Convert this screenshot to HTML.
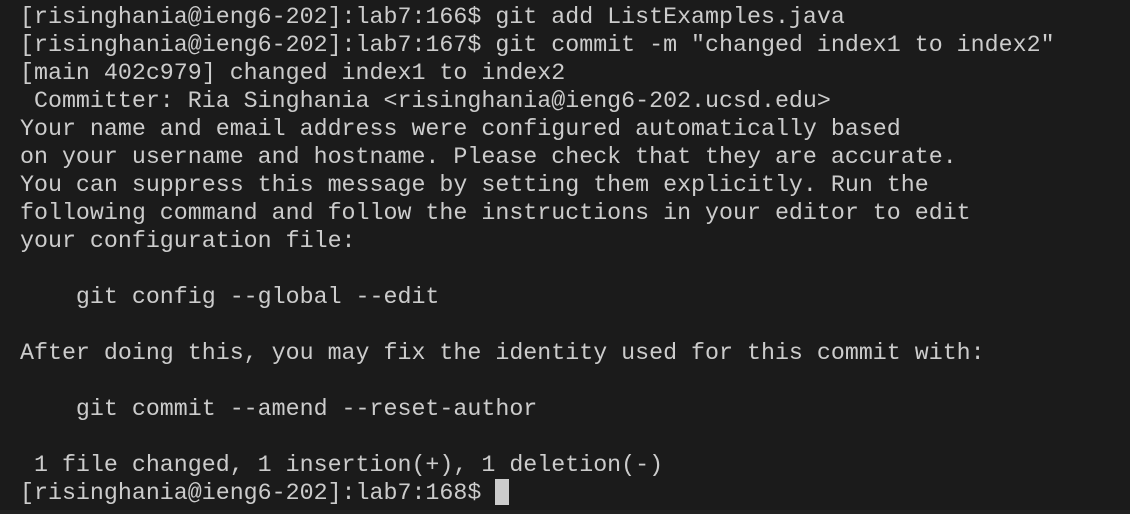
<!DOCTYPE html>
<html><head><meta charset="utf-8"><style>
html,body{margin:0;padding:0;background:#1b1b1b;width:1130px;height:514px;overflow:hidden}
pre{margin:0;position:absolute;left:20px;top:3px;font-family:"Liberation Mono",monospace;font-size:23.3px;line-height:28px;color:#cccccc;white-space:pre}
.cur{display:inline-block;width:14px;height:26px;background:#cccccc;vertical-align:-6px}
.bot{position:absolute;left:0;top:510px;width:1130px;height:4px;background:#232323}
</style></head><body>
<pre>[risinghania@ieng6-202]:lab7:166$ git add ListExamples.java
[risinghania@ieng6-202]:lab7:167$ git commit -m "changed index1 to index2"
[main 402c979] changed index1 to index2
 Committer: Ria Singhania &lt;risinghania@ieng6-202.ucsd.edu&gt;
Your name and email address were configured automatically based
on your username and hostname. Please check that they are accurate.
You can suppress this message by setting them explicitly. Run the
following command and follow the instructions in your editor to edit
your configuration file:

    git config --global --edit

After doing this, you may fix the identity used for this commit with:

    git commit --amend --reset-author

 1 file changed, 1 insertion(+), 1 deletion(-)
[risinghania@ieng6-202]:lab7:168$ <span class="cur"></span></pre>
<div class="bot"></div>
</body></html>
